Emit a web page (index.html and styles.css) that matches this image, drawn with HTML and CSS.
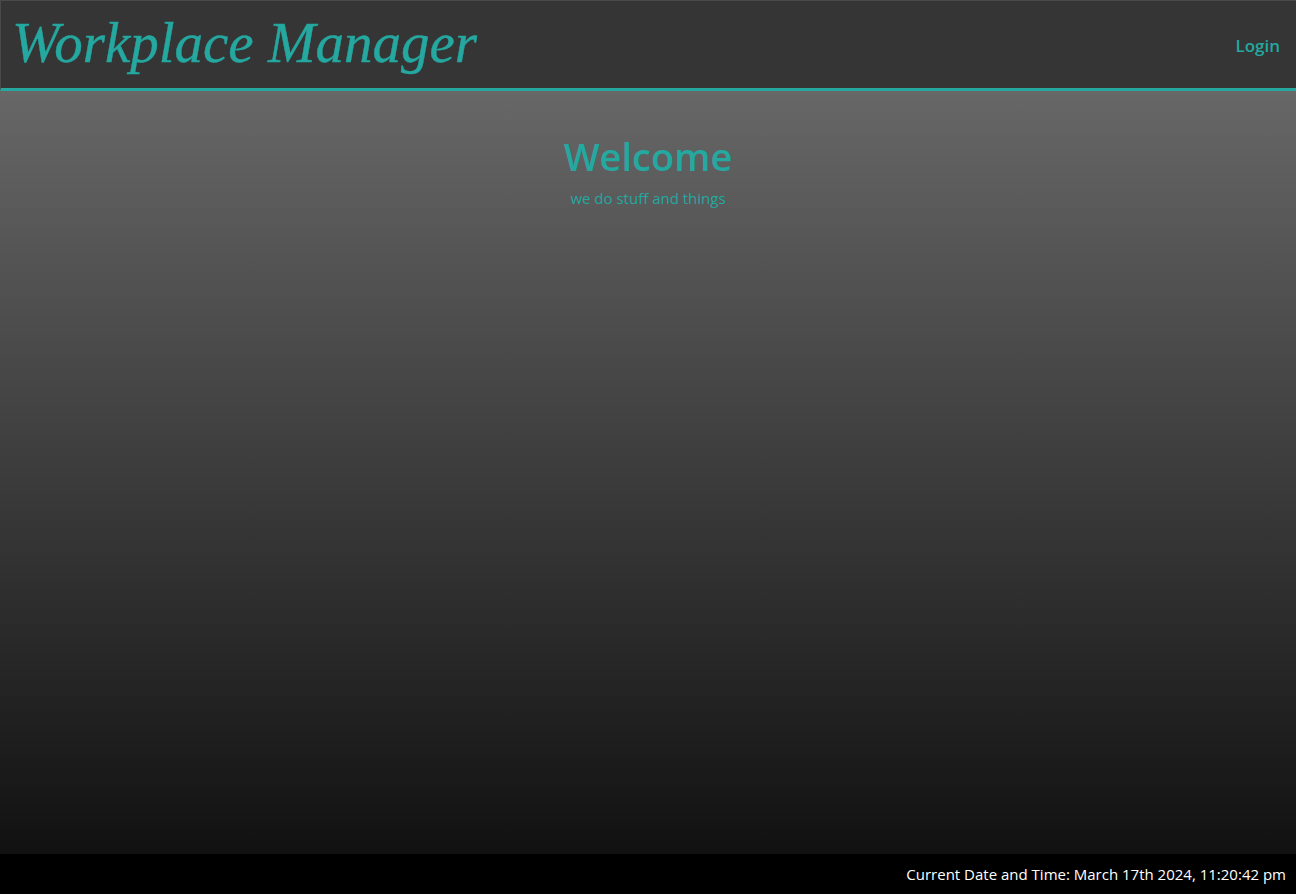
FILE: index.html
```html
<!DOCTYPE html>
<html>
<head>
<meta charset="utf-8">
<link rel="stylesheet" href="styles.css">
</head>
<body>
<div class="page">
  <header class="header">
    <h1 class="brand">Workplace Manager</h1>
    <a class="login" href="#">Login</a>
  </header>
  <main class="main">
    <h2 class="welcome">Welcome</h2>
    <p class="tagline">we do stuff and things</p>
  </main>
  <footer class="footer">Current Date and Time: March 17th 2024, 11:20:42 pm</footer>
</div>
</body>
</html>
```
FILE: styles.css
```css
html, body {
  margin: 0;
  padding: 0;
  height: 100%;
}
body {
  font-family: "Open Sans", "Noto Sans", sans-serif;
  background: #000;
}
.page {
  display: flex;
  flex-direction: column;
  height: 894px;
}
.header {
  box-sizing: border-box;
  height: 91px;
  background: #353535;
  border-top: 1px solid #4a4a4a;
  border-left: 1px solid #4a4a4a;
  border-bottom: 3px solid #24a8a0;
  display: flex;
  align-items: center;
  justify-content: space-between;
  padding: 0 16px 0 11px;
}
.brand {
  margin: 0;
  font-family: "Liberation Serif", "DejaVu Serif", serif;
  font-style: italic;
  font-weight: normal;
  font-size: 57px;
  color: #24a8a0;
  position: relative;
  top: -2px;
  -webkit-text-stroke: 0.4px #24a8a0;
}
.login {
  color: #24a8a0;
  text-decoration: none;
  font-size: 17px;
  font-weight: 600;
  position: relative;
  top: 1px;
}
.main {
  flex: 1;
  background: linear-gradient(to bottom, #676767, #111111);
  display: flex;
  flex-direction: column;
  align-items: center;
  padding-top: 41px;
}
.welcome {
  margin: 0;
  color: #24a8a0;
  font-size: 38px;
  font-weight: 600;
  line-height: 1.3;
}
.tagline {
  margin: 7px 0 0;
  color: #24a8a0;
  font-size: 15px;
}
.footer {
  height: 40px;
  background: #000;
  color: #fff;
  font-size: 15px;
  display: flex;
  align-items: center;
  justify-content: flex-end;
  padding: 0 10px;
  flex-shrink: 0;
}
```
